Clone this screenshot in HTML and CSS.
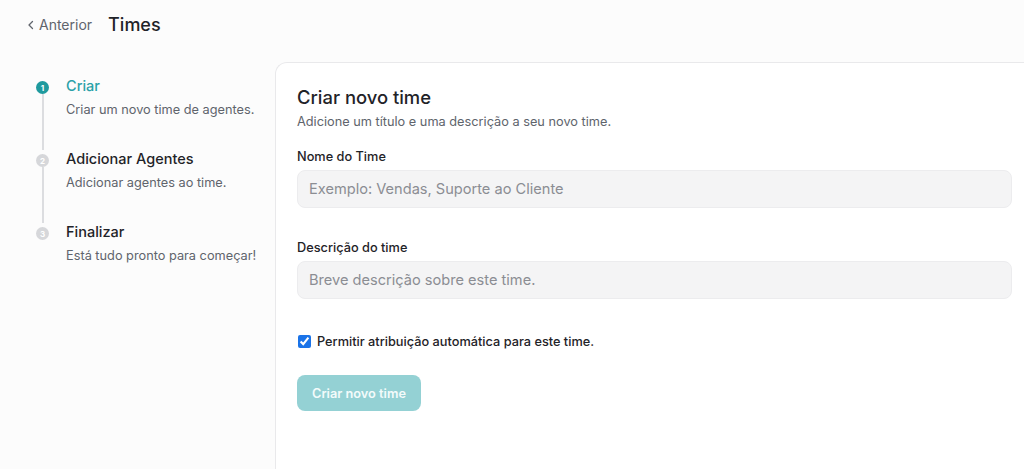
FILE: index.html
```html
<!DOCTYPE html>
<html lang="pt-BR">
<head>
<meta charset="utf-8">
<title>Times</title>
<link rel="stylesheet" href="styles.css">
</head>
<body>
<header class="topbar">
  <a class="back" href="#">
    <svg class="back-icon" width="10" height="10" viewBox="0 0 10 10"><path d="M6.5 1.5 3 5l3.5 3.5" fill="none" stroke="currentColor" stroke-width="1.3" stroke-linecap="round" stroke-linejoin="round"/></svg>
    <span>Anterior</span>
  </a>
  <h1 class="page-title">Times</h1>
</header>
<main class="layout">
  <aside class="steps">
    <div class="step active">
      <div class="marker"><span class="dot">1</span><span class="line"></span></div>
      <div class="step-text">
        <div class="step-title">Criar</div>
        <div class="step-desc">Criar um novo time de agentes.</div>
      </div>
    </div>
    <div class="step">
      <div class="marker"><span class="dot">2</span><span class="line"></span></div>
      <div class="step-text">
        <div class="step-title">Adicionar Agentes</div>
        <div class="step-desc">Adicionar agentes ao time.</div>
      </div>
    </div>
    <div class="step last">
      <div class="marker"><span class="dot">3</span></div>
      <div class="step-text">
        <div class="step-title">Finalizar</div>
        <div class="step-desc">Está tudo pronto para começar!</div>
      </div>
    </div>
  </aside>
  <section class="panel">
    <h2 class="panel-title">Criar novo time</h2>
    <p class="panel-sub">Adicione um título e uma descrição a seu novo time.</p>
    <label class="field">
      <span class="label">Nome do Time</span>
      <input class="input" type="text" placeholder="Exemplo: Vendas, Suporte ao Cliente">
    </label>
    <label class="field">
      <span class="label">Descrição do time</span>
      <input class="input" type="text" placeholder="Breve descrição sobre este time.">
    </label>
    <label class="check">
      <input type="checkbox" checked>
      <span>Permitir atribuição automática para este time.</span>
    </label>
    <button class="btn" type="button" disabled>Criar novo time</button>
  </section>
</main>
</body>
</html>
```

FILE: styles.css
```css
* { box-sizing: border-box; }
html, body { margin: 0; height: 100%; }
body {
  background: #fcfcfc;
  font-family: Inter, "Noto Sans", sans-serif;
  color: #1f2328;
  overflow: hidden;
}
.topbar {
  display: flex;
  align-items: center;
  gap: 16px;
  height: 48px;
  padding: 0 0 0 26px;
}
.back {
  display: flex;
  align-items: center;
  gap: 3px;
  color: #60646c;
  text-decoration: none;
  font-size: 14px;
}
.back-icon { margin-top: 1px; }
.page-title {
  margin: 0;
  font-size: 18px;
  font-weight: 500;
  color: #1f2328;
}
.layout {
  display: flex;
  padding-top: 14px;
  height: calc(100% - 48px);
}
.steps {
  width: 275px;
  flex-shrink: 0;
  padding: 15px 0 0 36px;
}
.step {
  display: flex;
  gap: 17px;
  height: 73px;
}
.marker {
  display: flex;
  flex-direction: column;
  align-items: center;
  width: 13px;
  padding-top: 4px;
}
.dot {
  width: 13px;
  height: 13px;
  border-radius: 50%;
  background: #d6d7da;
  color: #fff;
  font-size: 8px;
  font-weight: 700;
  display: flex;
  align-items: center;
  justify-content: center;
  flex-shrink: 0;
}
.step.active .dot { background: #1f9a9e; }
.line {
  width: 2px;
  flex: 1;
  background: #dcdde0;
}
.step-title {
  font-size: 14.5px;
  font-weight: 500;
  color: #1f2328;
  line-height: 18px;
}
.step.active .step-title { color: #2aa1a8; }
.step-desc {
  margin-top: 7px;
  font-size: 12.75px;
  color: #60646c;
  line-height: 16px;
}
.panel {
  flex: 1;
  background: #fff;
  border-top: 1px solid #e9e9eb;
  border-left: 1px solid #e9e9eb;
  border-top-left-radius: 12px;
  padding: 23px 12px 0 21px;
}
.panel-title {
  margin: 0;
  font-size: 18.4px;
  font-weight: 500;
  line-height: 22px;
  color: #1f2328;
}
.panel-sub {
  margin: 6px 0 0;
  font-size: 12.75px;
  color: #60646c;
  line-height: 16px;
}
.field {
  display: flex;
  flex-direction: column;
  gap: 5px;
  margin-top: 19px;
}
.field + .field { margin-top: 32px; }
.label {
  font-size: 12.75px;
  font-weight: 500;
  line-height: 16px;
  color: #1f2328;
}
.input {
  height: 38px;
  border: 1px solid #ececee;
  border-radius: 8px;
  background: #f4f4f5;
  padding: 0 11px;
  font-family: inherit;
  font-size: 14.6px;
  color: #1f2328;
  outline: none;
}
.input::placeholder { color: #8b8d93; }
.check {
  display: flex;
  align-items: center;
  gap: 6px;
  margin-top: 35px;
  font-size: 12.75px;
  font-weight: 500;
  color: #1f2328;
}
.check input {
  width: 13px;
  height: 13px;
  margin: 0 0 0 1px;
  accent-color: #1a73e8;
}
.btn {
  display: block;
  margin-top: 26px;
  height: 36px;
  padding: 0 15px;
  border: none;
  border-radius: 8px;
  background: #94d1d4;
  color: #f3fbfb;
  font-family: inherit;
  font-size: 12.75px;
  font-weight: 600;
}
```
